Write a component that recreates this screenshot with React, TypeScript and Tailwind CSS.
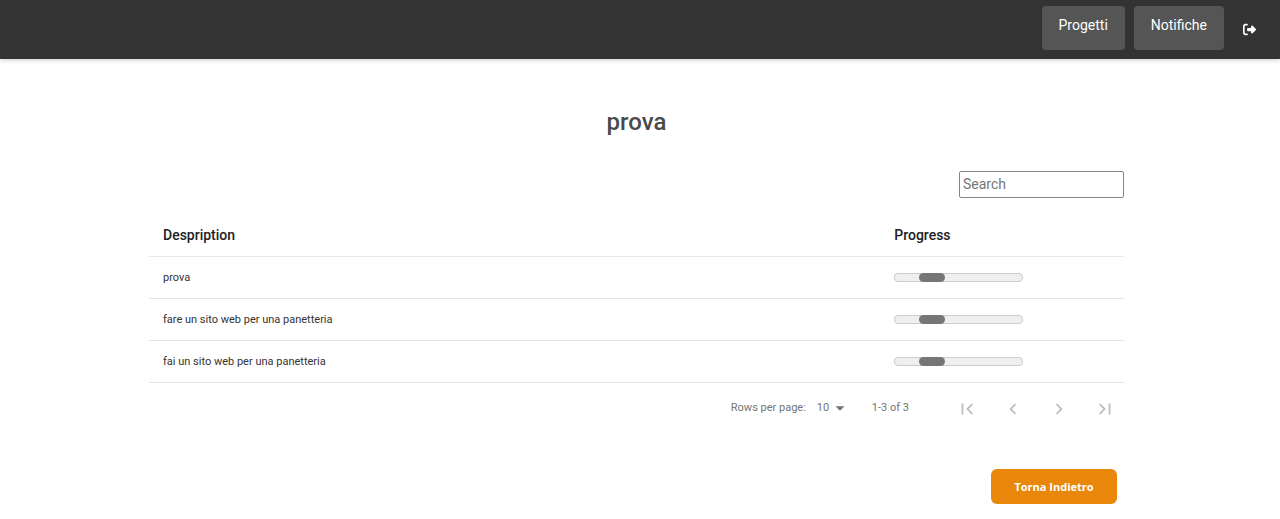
import { useState } from "react";
import { FaRightFromBracket } from "react-icons/fa6";
import {
  MdArrowDropDown,
  MdChevronLeft,
  MdChevronRight,
  MdFirstPage,
  MdLastPage,
} from "react-icons/md";

const tasks = [
  "prova",
  "fare un sito web per una panetteria",
  "fai un sito web per una panetteria",
];

const pagerButtons = [
  { label: "First Page", Icon: MdFirstPage },
  { label: "Previous Page", Icon: MdChevronLeft },
  { label: "Next Page", Icon: MdChevronRight },
  { label: "Last Page", Icon: MdLastPage },
];

function NavBar() {
  return (
    <header className="flex h-[59px] items-start justify-end bg-[#333333] pt-[6px] pr-6 shadow-[0_1px_5px_rgba(0,0,0,0.2)]">
      <nav className="flex gap-[9px] text-sm text-white">
        <a href="#progetti" className="h-11 rounded-[4px] bg-[#555555] px-[17px] pt-[9px] leading-5">
          Progetti
        </a>
        <a href="#notifiche" className="h-11 rounded-[4px] bg-[#555555] px-[17px] pt-[9px] leading-5">
          Notifiche
        </a>
      </nav>
      <button type="button" aria-label="Logout" className="ml-[19px] mt-[17px] text-white">
        <FaRightFromBracket size={13} />
      </button>
    </header>
  );
}

function IndeterminateBar() {
  return (
    <div
      role="progressbar"
      aria-label="Progress"
      className="h-[9px] w-[129px] rounded-full bg-[#efefef] pl-[25px] ring-1 ring-inset ring-[#cccccc]"
    >
      <div className="h-full w-[26px] rounded-full bg-[#767676]" />
    </div>
  );
}

function Pagination() {
  const [rows, setRows] = useState("10");
  return (
    <div className="flex h-[50px] items-center justify-end pr-2 text-[11px] text-[#757575]">
      <label htmlFor="rows" className="pt-[2px]">Rows per page:</label>
      <div className="relative ml-[11px]">
        <select
          id="rows"
          value={rows}
          onChange={(e) => setRows(e.target.value)}
          className="w-[33px] appearance-none bg-transparent leading-6"
        >
          <option>10</option>
          <option>15</option>
          <option>20</option>
        </select>
        <MdArrowDropDown size={22} className="pointer-events-none absolute top-px -right-px" />
      </div>
      <span className="ml-[22px] pt-[2px]">1-3 of 3</span>
      <div className="ml-[47px] flex gap-6 pt-[3px] text-[#bdbdbd]">
        {pagerButtons.map(({ label, Icon }) => (
          <button key={label} type="button" aria-label={label} disabled>
            <Icon size={22} />
          </button>
        ))}
      </div>
    </div>
  );
}

export default function App() {
  return (
    <div className="bg-white font-[Roboto,sans-serif]">
      <NavBar />
      <main className="pt-[47px] pr-[156px] pb-[15px] pl-[149px]">
        <h1 className="text-center text-2xl leading-8 font-medium text-[#4a4a4a]">prova</h1>
        <div className="mt-[33px] flex justify-end">
          <input
            type="text"
            placeholder="Search"
            aria-label="Search"
            className="h-[27px] w-[165px] rounded-[2px] border border-[#858585] px-[3px] pb-px text-sm placeholder:text-[#757575]"
          />
        </div>
        <table className="mt-[15px] w-full table-fixed border-collapse text-left">
          <thead>
            <tr className="h-[43px] border-b border-[#e8e8e8] text-sm text-[#212121]">
              <th className="w-3/4 px-[14px] pt-[2px] font-medium">Despription</th>
              <th className="w-1/4 px-[14px] pt-[2px] font-medium">Progress</th>
            </tr>
          </thead>
          <tbody>
            {tasks.map((task) => (
              <tr key={task} className="h-[42px] border-b border-[#e5e5e5] text-[11px] text-[#333333]">
                <td className="px-[14px] pt-[2px]">{task}</td>
                <td className="px-[14px]">
                  <IndeterminateBar />
                </td>
              </tr>
            ))}
          </tbody>
        </table>
        <Pagination />
        <div className="mt-9 flex justify-end pr-[7px]">
          <button
            type="button"
            className="h-[35px] w-[126px] rounded-[6px] bg-[#e8870a] pt-[2px] font-['Open_Sans',sans-serif] text-[11px] font-bold text-white"
          >
            Torna Indietro
          </button>
        </div>
      </main>
    </div>
  );
}
